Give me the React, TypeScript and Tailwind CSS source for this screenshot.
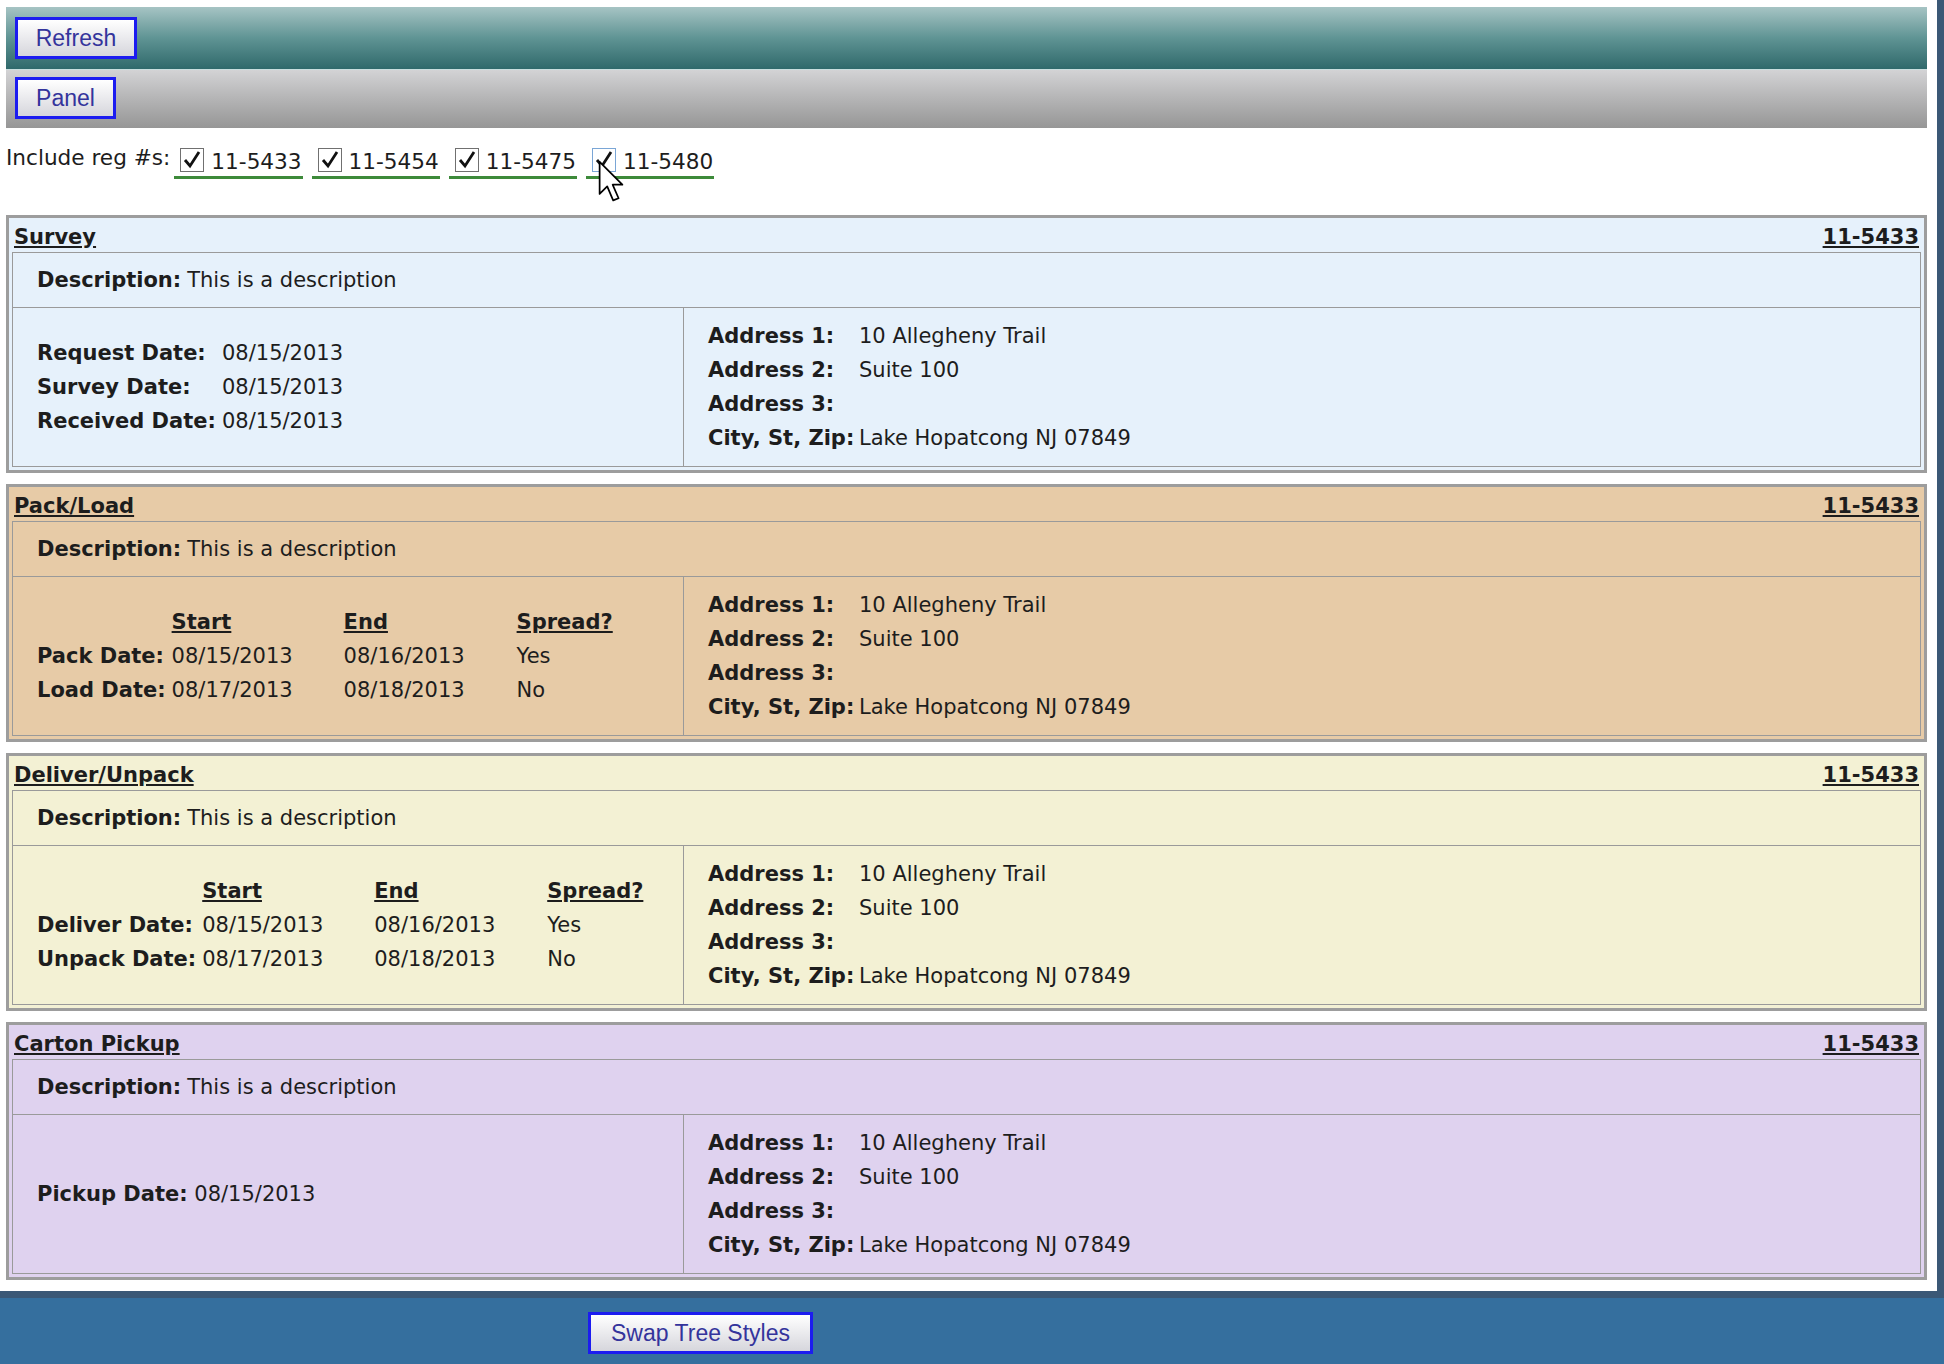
import React from 'react';

type Row = [string, string];

interface ServiceBlock {
    title: string;
    reg: string;
    bg: string;
    kind: 'simple' | 'range' | 'single';
    rows?: Row[];
    ranges?: { label: string; start: string; end: string; spread: string }[];
}

const address: Row[] = [
    ['Address 1:', '10 Allegheny Trail'],
    ['Address 2:', 'Suite 100'],
    ['Address 3:', ''],
    ['City, St, Zip:', 'Lake Hopatcong NJ 07849'],
];

const blocks: ServiceBlock[] = [
    {
        title: 'Survey',
        reg: '11-5433',
        bg: 'bg-[#e6f1fb]',
        kind: 'simple',
        rows: [
            ['Request Date:', '08/15/2013'],
            ['Survey Date:', '08/15/2013'],
            ['Received Date:', '08/15/2013'],
        ],
    },
    {
        title: 'Pack/Load',
        reg: '11-5433',
        bg: 'bg-[#e7cba7]',
        kind: 'range',
        ranges: [
            { label: 'Pack Date:', start: '08/15/2013', end: '08/16/2013', spread: 'Yes' },
            { label: 'Load Date:', start: '08/17/2013', end: '08/18/2013', spread: 'No' },
        ],
    },
    {
        title: 'Deliver/Unpack',
        reg: '11-5433',
        bg: 'bg-[#f3f1d4]',
        kind: 'range',
        ranges: [
            { label: 'Deliver Date:', start: '08/15/2013', end: '08/16/2013', spread: 'Yes' },
            { label: 'Unpack Date:', start: '08/17/2013', end: '08/18/2013', spread: 'No' },
        ],
    },
    {
        title: 'Carton Pickup',
        reg: '11-5433',
        bg: 'bg-[#dfd2ef]',
        kind: 'single',
        rows: [['Pickup Date:', '08/15/2013']],
    },
];

const regs = ['11-5433', '11-5454', '11-5475', '11-5480'];

const OldButton: React.FC<{ label: string; width: string }> = ({ label, width }) => (
    <button
        className={`${width} h-[42px] border-[3px] border-[#1c1cf0] bg-linear-to-b from-white to-[#d6d6dc] font-['Liberation_Sans',Arial,sans-serif] text-[23px] text-[#34349c] leading-none`}
    >
        {label}
    </button>
);

const CheckBox: React.FC<{ hover?: boolean }> = ({ hover }) => (
    <svg width="24" height="24" viewBox="0 0 24 24">
        <rect x="0.5" y="0.5" width="23" height="23" fill="white" stroke={hover ? '#7aa6d6' : '#707070'} />
        <path d="M5 12 L10 18 L19 4" fill="none" stroke="#111" strokeWidth="2.8" />
    </svg>
);

const Cursor = () => (
    <svg width="26" height="44" viewBox="0 0 24 40" className="absolute left-[598px] top-[160px]">
        <path d="M1.5 1.5 L1.5 31 L8.5 24 L14 37 L19 35 L13.5 22.5 L22.5 22.5 Z" fill="white" stroke="black" strokeWidth="1.6" strokeLinejoin="round" />
    </svg>
);

const AddressCell = () => (
    <div className="pl-[24px] flex items-center">
        <div className="grid grid-cols-[151px_auto]">
            {address.map(([k, v]) => (
                <React.Fragment key={k}>
                    <span className="font-bold">{k}</span>
                    <span>{v}</span>
                </React.Fragment>
            ))}
        </div>
    </div>
);

const LeftCell: React.FC<{ block: ServiceBlock }> = ({ block }) => {
    if (block.kind === 'range' && block.ranges) {
        return (
            <div className="grid grid-cols-[auto_172px_173px_auto] w-fit">
                <span />
                <span className="font-bold underline">Start</span>
                <span className="font-bold underline">End</span>
                <span className="font-bold underline">Spread?</span>
                {block.ranges.map((r) => (
                    <React.Fragment key={r.label}>
                        <span className="font-bold pr-[6px]">{r.label}</span>
                        <span>{r.start}</span>
                        <span>{r.end}</span>
                        <span>{r.spread}</span>
                    </React.Fragment>
                ))}
            </div>
        );
    }
    if (block.kind === 'single' && block.rows) {
        return (
            <div>
                {block.rows.map(([k, v]) => (
                    <div key={k}>
                        <span className="font-bold">{k}</span> {v}
                    </div>
                ))}
            </div>
        );
    }
    return (
        <div className="grid grid-cols-[185px_auto]">
            {block.rows?.map(([k, v]) => (
                <React.Fragment key={k}>
                    <span className="font-bold">{k}</span>
                    <span>{v}</span>
                </React.Fragment>
            ))}
        </div>
    );
};

const Panel: React.FC<{ block: ServiceBlock }> = ({ block }) => (
    <div className={`${block.bg} border-[3px] border-[#9d9d9d] p-[3px]`}>
        <div className="h-[31px] flex items-center justify-between px-[2px] font-bold">
            <span className="underline">{block.title}</span>
            <span className="underline">{block.reg}</span>
        </div>
        <div className="border border-[#9a9a9a]">
            <div className="h-[55px] flex items-center pl-[24px] border-b border-[#9a9a9a]">
                <span className="font-bold">Description:</span>
                <span className="ml-[6px]">This is a description</span>
            </div>
            <div className="grid grid-cols-[671px_1fr] h-[158px]">
                <div className="border-r border-[#9a9a9a] pl-[24px] flex items-center">
                    <LeftCell block={block} />
                </div>
                <AddressCell />
            </div>
        </div>
    </div>
);

export default function App() {
    return (
        <div className="relative min-h-screen bg-[#356f9e] font-['DejaVu_Sans',Verdana,sans-serif] text-[21px] leading-[34px] text-[#1d1d1d]">
            <div className="w-[1937px] bg-white pt-[7px] pl-[6px] pr-[10px] pb-[11px] shadow-[7px_0_0_#3b5876,0_7px_0_#3b5876,7px_7px_0_#3b5876]">
                <div className="h-[63px] pl-[9px] pt-[10px] bg-linear-to-b from-[#a6c4c4] via-[#5f9494] to-[#2f696b] border-b border-[#c9dede]">
                    <OldButton label="Refresh" width="w-[122px]" />
                </div>
                <div className="h-[58px] pl-[9px] pt-[7px] bg-linear-to-b from-[#d3d3d5] to-[#969696]">
                    <OldButton label="Panel" width="w-[101px]" />
                </div>
                <div className="h-[87px] pt-[14px] flex items-start">
                    <span className="text-[21.6px] mt-[-1px]">Include reg #s:</span>
                    <div className="flex gap-[9px] ml-[4px] mt-[2px]">
                        {regs.map((r, i) => (
                            <label key={r} className="flex items-center gap-[7px] pl-[6px] pr-[1px] h-[35px] border-b-[3px] border-[#3d8a3a] text-[21.6px]">
                                <CheckBox hover={i === 3} />
                                <span className="mt-[4px]">{r}</span>
                            </label>
                        ))}
                    </div>
                </div>
                <div className="flex flex-col gap-[11px]">
                    {blocks.map((b) => (
                        <Panel key={b.title} block={b} />
                    ))}
                </div>
            </div>
            <div className="pt-[21px] pl-[588px] pb-[11px]">
                <OldButton label="Swap Tree Styles" width="w-[225px]" />
            </div>
            <Cursor />
        </div>
    );
}
